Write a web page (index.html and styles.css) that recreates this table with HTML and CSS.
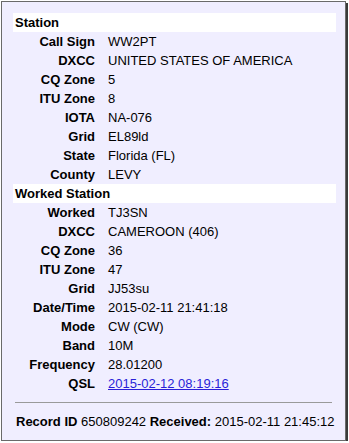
FILE: index.html
```html
<!DOCTYPE html>
<html>
<head>
<meta charset="utf-8">
<link rel="stylesheet" href="styles.css">
</head>
<body>
<div class="card">
  <div class="section">Station</div>
  <div class="rows">
    <div class="lbl">Call Sign</div><div class="val">WW2PT</div>
    <div class="lbl">DXCC</div><div class="val">UNITED STATES OF AMERICA</div>
    <div class="lbl">CQ Zone</div><div class="val">5</div>
    <div class="lbl">ITU Zone</div><div class="val">8</div>
    <div class="lbl">IOTA</div><div class="val">NA-076</div>
    <div class="lbl">Grid</div><div class="val">EL89ld</div>
    <div class="lbl">State</div><div class="val">Florida (FL)</div>
    <div class="lbl">County</div><div class="val">LEVY</div>
  </div>
  <div class="section">Worked Station</div>
  <div class="rows">
    <div class="lbl">Worked</div><div class="val">TJ3SN</div>
    <div class="lbl">DXCC</div><div class="val">CAMEROON (406)</div>
    <div class="lbl">CQ Zone</div><div class="val">36</div>
    <div class="lbl">ITU Zone</div><div class="val">47</div>
    <div class="lbl">Grid</div><div class="val">JJ53su</div>
    <div class="lbl">Date/Time</div><div class="val">2015-02-11 21:41:18</div>
    <div class="lbl">Mode</div><div class="val">CW (CW)</div>
    <div class="lbl">Band</div><div class="val">10M</div>
    <div class="lbl">Frequency</div><div class="val">28.01200</div>
    <div class="lbl">QSL</div><div class="val"><a href="#" class="link">2015-02-12 08:19:16</a></div>
  </div>
  <hr class="sep">
  <div class="footer"><b>Record ID</b> 650809242 <b>Received:</b> 2015-02-11 21:45:12</div>
</div>
</body>
</html>
```
FILE: styles.css
```css
html, body {
  margin: 0;
  padding: 0;
  background: #ffffff;
}
body {
  font-family: "Liberation Sans", Arial, Helvetica, sans-serif;
  font-size: 13px;
  color: #000;
}
.card {
  margin: 1px 0 0 1px;
  width: 323px;
  padding: 11px 9px 9px 11px;
  border: 1px solid #6a6a6a;
  box-shadow: 2px 2px 0 #3a3a3a;
  background: #f0eeff;
  line-height: 19px;
}
.section {
  background: #ffffff;
  font-weight: bold;
  padding-left: 2px;
  height: 19px;
}
.rows {
  display: grid;
  grid-template-columns: 82px 1fr;
  column-gap: 13px;
}
.lbl {
  font-weight: bold;
  text-align: right;
  white-space: nowrap;
}
.val {
  white-space: nowrap;
}
.link {
  color: #2a1fd8;
  text-decoration: underline;
}
.sep {
  border: 0;
  border-top: 1px solid #9a9a9a;
  margin: 9px 4px 9px 2px;
  height: 0;
}
.footer {
  padding-left: 3px;
  white-space: nowrap;
}
```
